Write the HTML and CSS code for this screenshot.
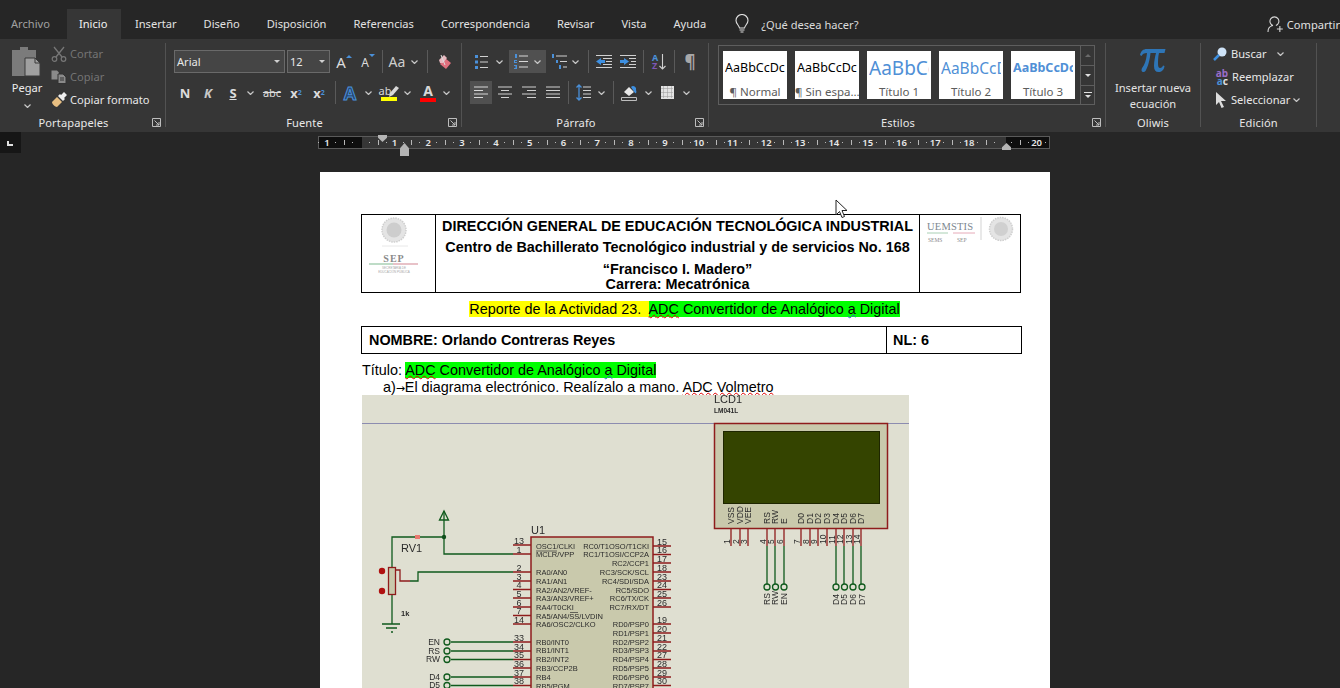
FILE: index.html
```html
<!DOCTYPE html>
<html lang="es">
<head>
  <meta charset="UTF-8">
  <title>Reporte de la Actividad 23 - Word</title>
  <link rel="stylesheet" href="styles.css">
</head>
<body>
  <svg class="defs" width="0" height="0">
    <symbol id="chev" viewBox="0 0 7 4"><path d="M.5.5 3.5 3.5 6.5.5" fill="none" stroke="#c8c8c8" stroke-width="1.2"/></symbol>
    <symbol id="launch" viewBox="0 0 9 9"><path d="M.5 8.5V.5H8.5V8.5H.5M2.5 2.5 7 7M7 4V7H4" fill="none" stroke="#bdbdbd"/></symbol>
  </svg>

  <nav class="tabs">
    <a class="tab tab-file">Archivo</a>
    <a class="tab tab-on">Inicio</a>
    <a class="tab">Insertar</a>
    <a class="tab">Diseño</a>
    <a class="tab">Disposición</a>
    <a class="tab">Referencias</a>
    <a class="tab">Correspondencia</a>
    <a class="tab">Revisar</a>
    <a class="tab">Vista</a>
    <a class="tab">Ayuda</a>
    <div class="tell">
      <svg width="16" height="20" viewBox="0 0 16 20"><path d="M5.5 14C5 11 2 10 2 6.5a6 6 0 0 1 12 0C14 10 11 11 10.5 14ZM5.5 16H10.5M6.5 18H9.5" fill="none" stroke="#e0e0e0" stroke-width="1.1"/></svg>
      <span>¿Qué desea hacer?</span>
    </div>
    <div class="share">
      <svg width="16" height="18" viewBox="0 0 16 18"><path d="M1 17C1 13 3 11 6 10.5A4.500 4.500 0 1 1 9 10.5M10 14H16M13 11V17" fill="none" stroke="#d8d8d8" stroke-width="1.1"/></svg>
      <span>Compartir</span>
    </div>
  </nav>

  <section class="ribbon">
    <div class="group g-clip">
      <div class="body clip-body">
        <div class="paste">
          <svg width="30" height="30" viewBox="0 0 30 30"><path d="M0 3H8V0H16V3H24V29H0Z" fill="#7b7b7b"/><path d="M13 11H23L28 16V29H13Z" fill="#a0a0a0" stroke="#3a3a3a"/><path d="M23 11V16H28" fill="none" stroke="#3a3a3a"/></svg>
          <span>Pegar</span>
          <svg class="chev"><use href="#chev"/></svg>
        </div>
        <div class="clip-list">
          <div class="clip-item off"><svg width="16" height="16" viewBox="0 0 16 16"><path d="M3 1 11 11M13 1 5 11" stroke="#777" stroke-width="1.3" fill="none"/><circle cx="3.5" cy="13" r="2.3" fill="none" stroke="#777" stroke-width="1.2"/><circle cx="12.5" cy="13" r="2.3" fill="none" stroke="#777" stroke-width="1.2"/></svg><span>Cortar</span></div>
          <div class="clip-item off"><svg width="16" height="14" viewBox="0 0 16 14"><path d="M.5.5H6L8 2.5V9.5H.5Z" fill="#8a8a8a"/><path d="M7 4H12L15 7V13.5H7Z" fill="#8a8a8a" stroke="#333"/><path d="M9 8H13M9 10H13" stroke="#333"/></svg><span>Copiar</span></div>
          <div class="clip-item"><svg width="16" height="16" viewBox="0 0 16 16"><path d="M1 10 6 5 11 10 6 15C4 15 1 12 1 10Z" fill="#e8bf82"/><path d="M7 4 9 2 10 3 13 0 16 3 13 6 14 7 12 9Z" fill="#efefef"/></svg><span>Copiar formato</span></div>
        </div>
      </div>
      <div class="foot"><span>Portapapeles</span><svg class="launch"><use href="#launch"/></svg></div>
    </div>

    <div class="group g-font">
      <div class="body">
        <div class="row">
          <div class="combo w111">Arial<i class="caret"></i></div>
          <div class="combo w43 ml2">12<i class="caret"></i></div>
          <div class="tb w24 ml2"><span class="big-a">A</span><i class="tri tri-up"></i></div>
          <div class="tb w24"><span class="small-a">A</span><i class="tri tri-down"></i></div>
          <i class="sep ml2"></i>
          <div class="tb w28 aa">Aa</div>
          <div class="tb w7"><svg class="chev"><use href="#chev"/></svg></div>
          <i class="sep ml9"></i>
          <div class="tb w32"><svg width="16" height="16" viewBox="0 0 16 16"><path d="M9 4 15 9 10 15 4 10Z" fill="#e0707e"/><path d="M4 9 3 6 8 1 11 4 7 9Z" fill="#e8b9c0"/><path d="M5 1 9 11" stroke="#ddd" fill="none"/></svg></div>
        </div>
        <div class="row row2">
          <div class="tb w22 fmt">N</div>
          <div class="tb w24 fmt ital">K</div>
          <div class="tb w26 fmt under">S</div>
          <div class="tb w9"><svg class="chev"><use href="#chev"/></svg></div>
          <div class="tb w28 ml3 strike">abc</div>
          <div class="tb w20 fmt script">x<sub>2</sub></div>
          <div class="tb w26 fmt script">x<sup>2</sup></div>
          <i class="sep ml3"></i>
          <div class="tb w28 effect">A</div>
          <div class="tb w8"><svg class="chev"><use href="#chev"/></svg></div>
          <div class="tb w26 ml4 stack"><span class="ab">ab<svg class="pen" width="10" height="12" viewBox="0 0 10 12"><path d="M0 12 1 8 7 1 10 3 4 10Z" fill="#d8d8d8"/></svg></span><i class="bar bar-yellow"></i></div>
          <div class="tb w8 ml1"><svg class="chev"><use href="#chev"/></svg></div>
          <div class="tb w26 ml4 stack"><span class="color-a">A</span><i class="bar bar-red"></i></div>
          <div class="tb w8 ml1"><svg class="chev"><use href="#chev"/></svg></div>
        </div>
      </div>
      <div class="foot"><span>Fuente</span><svg class="launch"><use href="#launch"/></svg></div>
    </div>

    <div class="group g-para">
      <div class="body">
        <div class="row">
          <div class="tb w22"><svg width="14" height="14" viewBox="0 0 14 14"><path d="M1 0h3v3H1zM1 5.5h3v3H1zM1 11h3v3H1z" fill="#4a90d9"/><path d="M6 1.5H14M6 7H14M6 12.5H14" stroke="#d0d0d0"/></svg></div>
          <div class="tb w8 ml3"><svg class="chev"><use href="#chev"/></svg></div>
          <div class="tb w37 ml6 hot"><svg width="14" height="15" viewBox="0 0 14 15"><path d="M1 0h2v4H1zM0 6h3v1H1v1h2v1H0zM0 11h3v4H0v-1h2v-.5H1v-1h1V12H0z" fill="#4a90d9"/><path d="M5 2H14M5 7.5H14M5 13H14" stroke="#d8d8d8"/></svg><svg class="chev chev-gap"><use href="#chev"/></svg></div>
          <div class="tb w20 ml3"><svg width="16" height="15" viewBox="0 0 16 15"><path d="M1 0h2v4H1zM5 6h2v3H5zM8 11h2v4H8z" fill="#4a90d9"/><path d="M5 2H16M9 7.5H16M12 13H16" stroke="#d0d0d0"/></svg></div>
          <div class="tb w8 ml2"><svg class="chev"><use href="#chev"/></svg></div>
          <i class="sep ml9"></i>
          <div class="tb w30"><svg width="16" height="13" viewBox="0 0 16 13"><path d="M0 6.5 5 3V5H9V8H5V10Z" fill="#3d8fe0"/><path d="M0 .5H16M7 3.5H16M10 6.5H16M7 9.5H16M0 12.5H16" stroke="#d0d0d0"/></svg></div>
          <div class="tb w18"><svg width="16" height="13" viewBox="0 0 16 13"><path d="M9 6.5 4 3V5H0V8H4V10Z" fill="#3d8fe0"/><path d="M0 .5H16M9 3.5H16M11 6.5H16M9 9.5H16M0 12.5H16" stroke="#d0d0d0"/></svg></div>
          <i class="sep ml6"></i>
          <div class="tb w30 sort"><span class="az"><b class="az-a">A</b><b class="az-z">Z</b></span><svg width="7" height="16" viewBox="0 0 7 16"><path d="M3.5 0V15M.5 12 3.5 15 6.5 12" fill="none" stroke="#d0d0d0" stroke-width="1.1"/></svg></div>
          <i class="sep"></i>
          <div class="tb w30 pilcrow">¶</div>
        </div>
        <div class="row row2">
          <div class="tb w22 hot"><svg width="14" height="13" viewBox="0 0 14 13"><path d="M0 1H14M0 4.5H9M0 8H14M0 11.5H9" stroke="#d8d8d8"/></svg></div>
          <div class="tb w22 ml2"><svg width="14" height="13" viewBox="0 0 14 13"><path d="M0 1H14M3 4.5H11M0 8H14M3 11.5H11" stroke="#d0d0d0"/></svg></div>
          <div class="tb w22 ml2"><svg width="14" height="13" viewBox="0 0 14 13"><path d="M0 1H14M5 4.5H14M0 8H14M5 11.5H14" stroke="#d0d0d0"/></svg></div>
          <div class="tb w22 ml2"><svg width="14" height="13" viewBox="0 0 14 13"><path d="M0 1H14M0 4.5H14M0 8H14M0 11.5H14" stroke="#d0d0d0"/></svg></div>
          <i class="sep ml4"></i>
          <div class="tb w28"><svg width="15" height="17" viewBox="0 0 15 17"><path d="M3 1V16M.5 3.5 3 1 5.5 3.5M.5 13.5 3 16 5.5 13.5" fill="none" stroke="#4a90d9" stroke-width="1.3"/><path d="M7 3H15M7 6.5H15M7 10H15M7 13.5H15" stroke="#d0d0d0"/></svg></div>
          <div class="tb w8"><svg class="chev"><use href="#chev"/></svg></div>
          <i class="sep ml8"></i>
          <div class="tb w30"><svg width="16" height="17" viewBox="0 0 16 17"><path d="M3 8 8 3 13 8 8 12Z" fill="#e8e8e8"/><path d="M10 3A3 3 0 0 1 15 6C16 8 15 10 14 9Z" fill="#3d8fe0"/><path d="M.5 13.5H15.5V16.5H.5Z" fill="none" stroke="#bdbdbd"/></svg></div>
          <div class="tb w8"><svg class="chev"><use href="#chev"/></svg></div>
          <div class="tb w30"><svg width="13" height="13" viewBox="0 0 13 13"><rect width="13" height="13" fill="#e4e4e4"/><path d="M.5 2.5H12.5M.5 6.5H12.5M.5 10.5H12.5M2.5.5V12.5M6.5.5V12.5M10.5.5V12.5" stroke="#999" stroke-dasharray="1 1"/></svg></div>
          <div class="tb w8"><svg class="chev"><use href="#chev"/></svg></div>
        </div>
      </div>
      <div class="foot"><span>Párrafo</span><svg class="launch"><use href="#launch"/></svg></div>
    </div>

    <div class="group g-styles">
      <div class="body">
        <div class="gallery">
          <div class="card"><div class="sample s-normal">AaBbCcDc</div><div class="cap">¶ Normal</div></div>
          <div class="card"><div class="sample s-normal">AaBbCcDc</div><div class="cap">¶ Sin espa...</div></div>
          <div class="card"><div class="sample s-t1">AaBbCc</div><div class="cap">Título 1</div></div>
          <div class="card"><div class="sample s-t2">AaBbCcD</div><div class="cap">Título 2</div></div>
          <div class="card"><div class="sample s-t3">AaBbCcDc</div><div class="cap">Título 3</div></div>
          <div class="scroll">
            <div class="sc sc-off"><i class="mini-up"></i></div>
            <div class="sc"><i class="mini-down"></i></div>
            <div class="sc sc-more"><i class="mini-down"></i></div>
          </div>
        </div>
      </div>
      <div class="foot"><span>Estilos</span><svg class="launch"><use href="#launch"/></svg></div>
    </div>

    <div class="group g-eq">
      <div class="body eq">
        <svg class="pi" width="26" height="25" viewBox="0 0 26 25"><path d="M0 7C1 3 3 1 7 1H25.500L24.500 5H19C18 9 18 13 18 16 18 19 19 20 20 20 21.500 20 22.500 19 23 17.500L24.500 18C24 22 21.500 24 18.500 24 15.500 24 14 22 14 18 14 13 15 9 16 5H10.500C10 11 8 19 5.500 23 4.500 24.500 1.500 24.500 1.500 22 1.500 20 3 19 4 17 6 13 6.500 9 7 5 4 5 2.500 6 1.500 8Z" fill="#2e75b6"/></svg>
        <span class="eq-text">Insertar nueva<br>ecuación</span>
      </div>
      <div class="foot"><span>Oliwis</span></div>
    </div>

    <div class="group g-edit">
      <div class="body edit">
        <div class="edit-item"><svg width="14" height="14" viewBox="0 0 14 14"><circle cx="9" cy="5" r="4.5" fill="#cfe3f7"/><path d="M6 8 1 13" stroke="#3d8fe0" stroke-width="2.5"/></svg><span>Buscar</span><svg class="chev buscar-chev"><use href="#chev"/></svg></div>
        <div class="edit-item"><span class="rep"><b class="rep-a">ab</b><b class="rep-c">ac</b></span><span>Reemplazar</span></div>
        <div class="edit-item"><svg width="14" height="16" viewBox="0 0 14 16"><path d="M3 0 13 9H8L11 15 8.5 16 6 10 3 13Z" fill="#dcdcdc"/></svg><span>Seleccionar</span><svg class="chev sel-chev"><use href="#chev"/></svg></div>
      </div>
      <div class="foot"><span>Edición</span></div>
    </div>
  </section>

  <main class="work">
    <div class="ruler-row">
      <div class="tab-stop"><i></i></div>
      <div class="ruler">
        <div class="ruler-strip">
          <span class="cm">1</span><span class="cm"></span><span class="cm">1</span><span class="cm">2</span><span class="cm">3</span><span class="cm">4</span><span class="cm">5</span><span class="cm">6</span><span class="cm">7</span><span class="cm">8</span><span class="cm">9</span><span class="cm">10</span><span class="cm">11</span><span class="cm">12</span><span class="cm">13</span><span class="cm">14</span><span class="cm">15</span><span class="cm">16</span><span class="cm">17</span><span class="cm">18</span><span class="cm"></span><span class="cm">20</span>
        </div>
        <i class="mark mark-first"></i>
        <i class="mark mark-hang"></i>
        <i class="mark mark-right"></i>
      </div>
    </div>

    <article class="page">
      <table class="head-table">
        <tr>
          <td class="logo-left">
            <svg width="72" height="76" viewBox="0 0 72 76">
              <circle cx="32" cy="15" r="12" fill="#e4e4e4" stroke="#cfcfcf" stroke-width="1.5" stroke-dasharray="1.5 1"/>
              <circle cx="32" cy="15" r="7.5" fill="#cdcdcd"/>
              <path d="M20 31H46" stroke="#e8e8e8"/>
              <text class="sep-word" x="32" y="47">SEP</text>
              <path d="M7 49H31" stroke="#a9d0b4" stroke-width="1.5"/>
              <path d="M31 49H56" stroke="#e0aeb6" stroke-width="1.5"/>
              <text class="sep-small" x="32" y="54">SECRETARÍA DE</text>
              <text class="sep-small" x="32" y="58">EDUCACIÓN PÚBLICA</text>
            </svg>
          </td>
          <td class="head-title">
            <p class="t1">DIRECCIÓN GENERAL DE EDUCACIÓN TECNOLÓGICA INDUSTRIAL</p>
            <p class="t2">Centro de Bachillerato Tecnológico industrial y de servicios No. 168</p>
            <p class="t3">“Francisco I. Madero”</p>
            <p class="t4">Carrera: Mecatrónica</p>
          </td>
          <td class="logo-right">
            <svg width="100" height="76" viewBox="0 0 100 76">
              <text class="uem" x="7" y="15">UEMSTIS</text>
              <path d="M7 18H28" stroke="#a9d0b4"/>
              <path d="M33 18H55" stroke="#e6aab8"/>
              <text class="uem-small" x="8" y="27">SEMS</text>
              <text class="uem-small" x="37" y="27">SEP</text>
              <path d="M61 2V25" stroke="#e2e2e2" stroke-width="1.5"/>
              <circle cx="81" cy="14" r="11.500" fill="#e4e4e4" stroke="#cfcfcf" stroke-width="1.5" stroke-dasharray="1.5 1"/>
              <circle cx="81" cy="14" r="7" fill="#d0d0d0"/>
            </svg>
          </td>
        </tr>
      </table>

      <p class="report"><span class="hl-y">Reporte de la Actividad 23.&nbsp; </span><span class="hl-g"><span class="typo">ADC</span> Convertidor de Analógico <span class="gram">a</span> Digital</span></p>

      <table class="name-table">
        <tr>
          <td class="name-cell">NOMBRE: Orlando Contreras Reyes</td>
          <td class="nl-cell">NL: 6</td>
        </tr>
      </table>

      <p class="title-line">Título: <span class="hl-g"><span class="typo">ADC</span> Convertidor de Analógico <span class="gram">a</span> Digital</span></p>
      <p class="item-line">a)<span class="arrow">→</span>El diagrama electrónico. Realízalo a mano. <span class="typo">ADC Volmetro</span></p>

      <svg class="schematic" width="547" height="300" viewBox="362 395 547 300">
        <rect x="362" y="395" width="547" height="300" fill="#dfdfd1"/>
        <path d="M362 423.5H909" stroke="#8c8cb0"/>

        <!-- LCD -->
        <text class="lbl lcd-name" x="714" y="403">LCD1</text>
        <text class="lbl tiny-bold" x="714" y="413">LM041L</text>
        <rect x="714.5" y="423.5" width="173" height="105" fill="#c9c9ac" stroke="#8f1c1c" stroke-width="1.5"/>
        <rect x="723.5" y="431.5" width="156" height="72" fill="#344400" stroke="#1e2600"/>
        <g class="pin">
          <path d="M731 529V546M740 529V546M748 529V546M767 529V546M775 529V546M784 529V546M801 529V546M810 529V546M818 529V546M827 529V546M836 529V546M844 529V546M853 529V546M861 529V546"/>
        </g>
        <g class="wire">
          <path d="M767 546V584M775 546V584M784 546V584M836 546V584M844 546V584M853 546V584M861 546V584"/>
          <circle cx="767" cy="587" r="3"/><circle cx="775.5" cy="587" r="3"/><circle cx="784" cy="587" r="3"/>
          <circle cx="836" cy="587" r="3"/><circle cx="844.5" cy="587" r="3"/><circle cx="853" cy="587" r="3"/><circle cx="862" cy="587" r="3"/>
        </g>
        <g class="lbl vert">
          <text transform="translate(734 524) rotate(-90)">VSS</text>
          <text transform="translate(743 524) rotate(-90)">VDD</text>
          <text transform="translate(751 524) rotate(-90)">VEE</text>
          <text transform="translate(770 524) rotate(-90)">RS</text>
          <text transform="translate(778 524) rotate(-90)">RW</text>
          <text transform="translate(787 524) rotate(-90)">E</text>
          <text transform="translate(804 524) rotate(-90)">D0</text>
          <text transform="translate(813 524) rotate(-90)">D1</text>
          <text transform="translate(821 524) rotate(-90)">D2</text>
          <text transform="translate(830 524) rotate(-90)">D3</text>
          <text transform="translate(839 524) rotate(-90)">D4</text>
          <text transform="translate(847 524) rotate(-90)">D5</text>
          <text transform="translate(856 524) rotate(-90)">D6</text>
          <text transform="translate(864 524) rotate(-90)">D7</text>
          <text transform="translate(730 544) rotate(-90)">1</text>
          <text transform="translate(739 544) rotate(-90)">2</text>
          <text transform="translate(747 544) rotate(-90)">3</text>
          <text transform="translate(766 544) rotate(-90)">4</text>
          <text transform="translate(774 544) rotate(-90)">5</text>
          <text transform="translate(783 544) rotate(-90)">6</text>
          <text transform="translate(800 544) rotate(-90)">7</text>
          <text transform="translate(809 544) rotate(-90)">8</text>
          <text transform="translate(817 544) rotate(-90)">9</text>
          <text transform="translate(826 544) rotate(-90)">10</text>
          <text transform="translate(835 544) rotate(-90)">11</text>
          <text transform="translate(843 544) rotate(-90)">12</text>
          <text transform="translate(852 544) rotate(-90)">13</text>
          <text transform="translate(860 544) rotate(-90)">14</text>
          <text transform="translate(770 605) rotate(-90)">RS</text>
          <text transform="translate(778 605) rotate(-90)">RW</text>
          <text transform="translate(787 605) rotate(-90)">EN</text>
          <text transform="translate(839 605) rotate(-90)">D4</text>
          <text transform="translate(847 605) rotate(-90)">D5</text>
          <text transform="translate(856 605) rotate(-90)">D6</text>
          <text transform="translate(865 605) rotate(-90)">D7</text>
        </g>

        <!-- PIC -->
        <text class="lbl u1" x="531" y="534">U1</text>
        <rect x="531" y="537" width="122" height="170" fill="#c9c9ac" stroke="#8f1c1c" stroke-width="1.5"/>
        <g class="pin">
          <path d="M513 545H531M513 554H531M513 572H531M513 581H531M513 589.5H531M513 598H531M513 607H531M513 615.5H531M513 624H531M513 642H531M513 651H531M513 659.5H531M513 668H531M513 677H531M513 685.5H531"/>
          <path d="M653 546H671M653 554.5H671M653 563H671M653 572H671M653 581H671M653 589.5H671M653 598H671M653 607H671M653 624H671M653 633H671M653 642H671M653 651H671M653 659.5H671M653 668H671M653 677H671M653 685.5H671"/>
        </g>
        <path class="over" d="M536 551H557M570 612.500H578"/>
        <g class="lbl chip">
          <text x="536" y="549">OSC1/CLKI</text>
          <text x="536" y="557">MCLR/VPP</text>
          <text x="536" y="575">RA0/AN0</text>
          <text x="536" y="584">RA1/AN1</text>
          <text x="536" y="593">RA2/AN2/VREF-</text>
          <text x="536" y="601">RA3/AN3/VREF+</text>
          <text x="536" y="610">RA4/T0CKI</text>
          <text x="536" y="619">RA5/AN4/SS/LVDIN</text>
          <text x="536" y="627">RA6/OSC2/CLKO</text>
          <text x="536" y="645">RB0/INT0</text>
          <text x="536" y="653">RB1/INT1</text>
          <text x="536" y="662">RB2/INT2</text>
          <text x="536" y="671">RB3/CCP2B</text>
          <text x="536" y="680">RB4</text>
          <text x="536" y="689">RB5/PGM</text>
        </g>
        <g class="lbl chip chip-r">
          <text x="649" y="549">RC0/T1OSO/T1CKI</text>
          <text x="649" y="557">RC1/T1OSI/CCP2A</text>
          <text x="649" y="566">RC2/CCP1</text>
          <text x="649" y="575">RC3/SCK/SCL</text>
          <text x="649" y="584">RC4/SDI/SDA</text>
          <text x="649" y="593">RC5/SDO</text>
          <text x="649" y="601">RC6/TX/CK</text>
          <text x="649" y="610">RC7/RX/DT</text>
          <text x="649" y="627">RD0/PSP0</text>
          <text x="649" y="636">RD1/PSP1</text>
          <text x="649" y="645">RD2/PSP2</text>
          <text x="649" y="653">RD3/PSP3</text>
          <text x="649" y="662">RD4/PSP4</text>
          <text x="649" y="671">RD5/PSP5</text>
          <text x="649" y="680">RD6/PSP6</text>
          <text x="649" y="689">RD7/PSP7</text>
        </g>
        <g class="lbl num">
          <text x="519" y="544">13</text><text x="519" y="553">1</text><text x="519" y="571">2</text><text x="519" y="580">3</text><text x="519" y="588">4</text><text x="519" y="597">5</text><text x="519" y="606">6</text><text x="519" y="614">7</text><text x="519" y="623">14</text><text x="519" y="641">33</text><text x="519" y="650">34</text><text x="519" y="658">35</text><text x="519" y="667">36</text><text x="519" y="676">37</text><text x="519" y="684">38</text>
          <text x="662" y="545">15</text><text x="662" y="553">16</text><text x="662" y="562">17</text><text x="662" y="571">18</text><text x="662" y="580">23</text><text x="662" y="588">24</text><text x="662" y="597">25</text><text x="662" y="606">26</text><text x="662" y="623">19</text><text x="662" y="632">20</text><text x="662" y="641">21</text><text x="662" y="650">22</text><text x="662" y="658">27</text><text x="662" y="667">28</text><text x="662" y="676">29</text><text x="662" y="684">30</text>
        </g>

        <!-- potenciometro y terminales -->
        <g class="wire">
          <path d="M392 567V537H444V511M444 537V554H513M410 581H418V572H513M392 594V624"/>
          <path d="M439.5 520 444 511 448.5 520Z"/>
          <path d="M382 624H400M386 628H397M391 632H393"/>
          <path d="M451 642H513M451 651H513M451 659.5H513M451 677H513M451 685.5H513"/>
          <circle cx="447" cy="642" r="3"/><circle cx="447" cy="651" r="3"/><circle cx="447" cy="659.5" r="3"/><circle cx="447" cy="677" r="3"/><circle cx="447" cy="685.5" r="3"/>
        </g>
        <circle cx="444" cy="537" r="2.2" fill="#0f4f1b"/>
        <rect x="415" y="535" width="5" height="4" fill="#ea7a70"/>
        <rect x="388.5" y="567.5" width="7" height="27" fill="#c9c9ac" stroke="#8f1c1c" stroke-width="1.3"/>
        <path class="red-wire" d="M396 570 H400 V581 H410"/>
        <circle cx="382" cy="571" r="3.2" fill="#b01010"/>
        <circle cx="382" cy="591" r="3.2" fill="#b01010"/>
        <text class="lbl rv" x="401" y="552">RV1</text>
        <text class="lbl one-k" x="401" y="616">1k</text>
        <g class="lbl term">
          <text x="440" y="645">EN</text><text x="440" y="654">RS</text><text x="440" y="662">RW</text><text x="440" y="680">D4</text><text x="440" y="688">D5</text>
        </g>
      </svg>
    </article>

    <svg class="cursor" width="13" height="20" viewBox="0 0 13 20"><path d="M1 1V16L4.5 12.5 7 18.5 9.5 17.5 7 11.5H12Z" fill="#fff" stroke="#222"/></svg>
  </main>
</body>
</html>
```
FILE: styles.css
```css
/* ventana de Word en tema oscuro */
* { box-sizing: border-box; }
html, body { height: 688px; }
body {
  margin: 0;
  overflow: hidden;
  background: #262626;
  color: #e6e6e6;
  font: 11.1px "Noto Sans", sans-serif;
}
.defs { position: absolute; }
p { margin: 0; }

/* pestañas */
.tabs {
  display: flex;
  align-items: flex-end;
  height: 39px;
  background: #262626;
}
.tab {
  height: 30px;
  line-height: 30px;
  padding: 0 13px 0 14px;
  white-space: nowrap;
  color: #e2e2e2;
}
.tab-file { width: 67px; padding: 0 0 0 11px; color: #a0a0a0; }
.tab-on { width: 54px; padding: 0 0 0 12px; background: #363636; color: #f2f2f2; }
.tell {
  display: flex;
  align-items: center;
  gap: 11px;
  height: 30px;
  margin-left: 15px;
  color: #dcdcdc;
}
.share {
  display: flex;
  align-items: center;
  gap: 4px;
  height: 30px;
  margin-left: auto;
  width: 73px;
  white-space: nowrap;
  color: #e2e2e2;
}

/* cinta */
.ribbon {
  display: flex;
  height: 93px;
  padding-top: 4px;
  background: #363636;
}
.group {
  height: 84px;
  border-right: 1px solid #525252;
  flex: none;
}
.g-clip { width: 166px; }
.g-font { width: 296px; padding-left: 8px; }
.g-para { width: 247px; padding-left: 8px; }
.g-styles { width: 397px; padding-left: 9px; }
.g-eq { width: 95px; }
.g-edit { width: 116px; }
.body { display: flow-root; height: 72px; }
.foot {
  display: flex;
  align-items: center;
  height: 16px;
  margin-top: -1px;
  color: #e8e8e8;
  letter-spacing: .1px;
}
.foot span { flex: 1; text-align: center; white-space: nowrap; }
.launch { width: 9px; height: 9px; margin: 0 4px 0 5px; }
.g-font .foot { margin-left: -8px; }
.g-para .foot { margin-left: -8px; }
.g-styles .foot { margin-left: -9px; }

.row { display: flex; align-items: center; height: 23px; margin-top: 7px; }
.row2 { margin-top: 8px; }
.tb {
  display: flex;
  align-items: center;
  justify-content: center;
  height: 23px;
  flex: none;
  color: #dcdcdc;
}
.sep { width: 1px; height: 23px; background: #5a5a5a; flex: none; }
.chev { width: 7px; height: 4px; flex: none; }
.chev-gap { margin-left: 6px; }
.hot { background: #505050; }

.w7 { width: 7px; } .w8 { width: 8px; } .w9 { width: 9px; }
.w18 { width: 18px; } .w20 { width: 20px; } .w22 { width: 22px; }
.w24 { width: 24px; } .w26 { width: 26px; } .w28 { width: 28px; }
.w30 { width: 30px; } .w32 { width: 32px; } .w37 { width: 37px; }
.ml1 { margin-left: 1px; } .ml2 { margin-left: 2px; } .ml3 { margin-left: 3px; }
.ml4 { margin-left: 4px; } .ml6 { margin-left: 6px; } .ml8 { margin-left: 8px; }
.ml9 { margin-left: 9px; }

/* portapapeles */
.clip-body { display: flex; }
.paste {
  display: flex;
  flex-direction: column;
  align-items: center;
  width: 50px;
  padding: 4px 0 0 4px;
  color: #ececec;
}
.paste span { margin-top: 2px; line-height: 18px; }
.paste .chev { margin-top: 7px; }
.clip-list { display: flex; flex-direction: column; margin: -1px 0 0 1px; }
.clip-item {
  display: flex;
  align-items: center;
  gap: 3px;
  height: 23px;
  white-space: nowrap;
  color: #e8e8e8;
}
.clip-item.off { color: #747474; }

/* fuente */
.combo {
  position: relative;
  height: 23px;
  padding-left: 2px;
  line-height: 21px;
  background: #454545;
  border: 1px solid #6a6a6a;
  color: #e8e8e8;
  flex: none;
}
.w111 { width: 111px; }
.w43 { width: 43px; }
.caret {
  position: absolute;
  right: 4px;
  top: 9px;
  border: 3px solid transparent;
  border-top: 3px solid #d0d0d0;
}
.big-a { font-size: 15px; }
.small-a { font-size: 12px; margin-top: 2px; }
.tri { width: 0; height: 0; border: 3px solid transparent; }
.tri-up { border-bottom: 3px solid #4a90d9; margin-top: -14px; }
.tri-down { border-top: 3px solid #4a90d9; margin-top: -9px; }
.aa { font-size: 14px; color: #cfcfcf; }
.fmt { font-weight: 700; font-size: 13px; }
.ital { font-style: italic; color: #c8c8c8; }
.under { text-decoration: underline; }
.strike { font-size: 11px; text-decoration: line-through; }
.script sub, .script sup { font-size: 7px; color: #4a90d9; line-height: 0; }
.script sub { vertical-align: -3px; }
.script sup { vertical-align: 5px; }
.effect {
  font-size: 18px;
  font-weight: 700;
  color: #26466e;
  -webkit-text-stroke: 1px #4a90d9;
}
.stack { flex-direction: column; }
.ab { display: flex; align-items: flex-end; font-size: 11px; line-height: 13px; color: #d8d8d8; }
.pen { margin-left: -2px; }
.color-a { font-size: 14px; line-height: 15px; font-weight: 700; color: #d8d8d8; }
.bar { width: 16px; height: 4px; }
.bar-yellow { background: #ffff00; }
.bar-red { background: #ff0000; }

/* parrafo */
.sort { gap: 1px; }
.az { display: flex; flex-direction: column; font-size: 9px; line-height: 8px; }
.az b { font-weight: 700; }
.az-a { color: #4a90d9; }
.az-z { color: #7e57b5; }
.pilcrow { font-size: 17px; font-weight: 700; color: #a8a8a8; }

/* estilos */
.gallery {
  display: flex;
  gap: 8px;
  width: 377px;
  height: 60px;
  margin-top: 2px;
  padding: 5px 0 0 4px;
  border: 1px solid #5e5e5e;
}
.card {
  width: 64px;
  height: 48px;
  background: #fff;
  overflow: hidden;
  text-align: center;
  flex: none;
}
.sample {
  height: 32px;
  margin: 0 2px;
  line-height: 34px;
  overflow: hidden;
  white-space: nowrap;
  text-align: left;
}
.s-normal { color: #000; font-size: 12.5px; }
.s-t1 { color: #4f8fd6; font-size: 19px; }
.s-t2 { color: #4f8fd6; font-size: 15.5px; }
.s-t3 { color: #4f8fd6; font-size: 12.5px; font-weight: 700; }
.cap { line-height: 17px; color: #5c5c5c; font-size: 11.5px; white-space: nowrap; }
.scroll {
  display: flex;
  flex-direction: column;
  width: 14px;
  height: 58px;
  margin: -5px 0 0 -3px;
  border-left: 1px solid #5e5e5e;
}
.sc {
  display: flex;
  align-items: center;
  justify-content: center;
  flex-direction: column;
  gap: 2px;
  height: 20px;
  border-bottom: 1px solid #5e5e5e;
}
.sc:last-child { border-bottom: 0; height: 18px; }
.mini-up { border: 3px solid transparent; border-bottom: 3px solid #6a6a6a; border-top: 0; }
.mini-down { border: 3px solid transparent; border-top: 3px solid #e0e0e0; border-bottom: 0; }
.sc-more::before { content: ""; width: 8px; height: 1px; background: #e0e0e0; }

/* ecuacion */
.eq {
  display: flex;
  flex-direction: column;
  align-items: center;
}
.pi { margin: 5px 0 7px; flex: none; }
.eq-text { text-align: center; line-height: 16px; color: #e4e4e4; }

/* edicion */
.edit { padding-left: 12px; }
.edit-item {
  display: flex;
  align-items: center;
  gap: 3px;
  height: 23px;
  white-space: nowrap;
  color: #e8e8e8;
}
.edit-item:first-child { margin-top: -1px; }
.edit-item span:not(.rep) { margin-left: 1px; }
.buscar-chev { margin-left: 7px; }
.rep { display: flex; flex-direction: column; width: 15px; font-size: 10px; line-height: 8px; }
.rep b { font-weight: 700; }
.rep-a { color: #9a6dc8; text-align: right; }
.rep-c { color: #e0e0e0; text-align: right; }
.rep-c::first-letter { color: #4a90d9; }

/* regla */
.work { position: relative; }
.ruler-row { display: flex; height: 40px; }
.tab-stop {
  position: relative;
  width: 21px;
  height: 21px;
  background: #161616;
}
.tab-stop i {
  position: absolute;
  left: 7px;
  top: 9px;
  width: 6px;
  height: 5px;
  border-left: 2px solid #e0e0e0;
  border-bottom: 2px solid #e0e0e0;
}
.ruler {
  position: relative;
  width: 732px;
  height: 13px;
  margin: 4px 0 0 297px;
  background: linear-gradient(90deg, #0e0e0e 43px, #363636 43px, #363636 687px, #0e0e0e 687px);
  border: 1px solid #5a5a5a;
}
.ruler-strip {
  display: flex;
  height: 11px;
  margin-left: -9px;
  clip-path: inset(0 0 0 8px);
}
.cm {
  width: 33.8px;
  flex: none;
  text-align: center;
  font-size: 9.5px;
  line-height: 11px;
  font-weight: 600;
  color: #e8e8e8;
  background:
    linear-gradient(#b8b8b8, #b8b8b8) 8px 5px / 1px 1px no-repeat,
    linear-gradient(#b8b8b8, #b8b8b8) 0 3px / 1px 5px no-repeat,
    linear-gradient(#b8b8b8, #b8b8b8) 25px 5px / 1px 1px no-repeat;
}
.mark { position: absolute; width: 9px; }
.mark-first {
  left: 59px;
  top: -2px;
  height: 7px;
  background: #b4b4b4;
  clip-path: polygon(0 0, 100% 0, 100% 40%, 50% 100%, 0 40%);
}
.mark-hang {
  left: 81px;
  top: 6px;
  height: 13px;
  background: #b4b4b4;
  clip-path: polygon(50% 0, 100% 40%, 100% 100%, 0 100%, 0 40%);
}
.mark-right {
  left: 683px;
  top: 6px;
  height: 7px;
  background: #b4b4b4;
  clip-path: polygon(50% 0, 100% 60%, 100% 100%, 0 100%, 0 60%);
}

/* hoja */
.page {
  width: 730px;
  height: 640px;
  margin-left: 320px;
  padding: 42px 0 0 42px;
  background: #fff;
  color: #000;
  font: 14.4px "Liberation Sans", Arial, sans-serif;
}
table { border-collapse: collapse; table-layout: fixed; margin-left: -1px; }
td { padding: 0; border: 1px solid #000; }
.head-table { width: 660px; height: 79px; }
.logo-left { width: 74px; vertical-align: top; line-height: 0; }
.logo-right { width: 101px; vertical-align: top; line-height: 0; }
.head-title { text-align: center; font-weight: 700; vertical-align: top; white-space: nowrap; }
.t1 { margin-top: 3px; line-height: 17px; }
.t2 { margin-top: 4px; line-height: 17px; }
.t3 { margin-top: 5px; line-height: 16px; }
.t4 { line-height: 15px; }
.sep-word { font: 700 10px "Liberation Serif", serif; fill: #8a8a8a; text-anchor: middle; letter-spacing: 1px; }
.sep-small { font: 3px "Liberation Sans", sans-serif; fill: #a8a8a8; text-anchor: middle; }
.uem { font: 10.5px "Liberation Serif", serif; fill: #7d8790; letter-spacing: .2px; }
.uem-small { font: 5.5px "Liberation Serif", serif; fill: #8a8a8a; }

.report { margin: 8px 0; width: 659px; padding-right: 14px; line-height: 17px; text-align: center; }
.hl-y { background: #ffff00; }
.hl-g { background: #00ff00; }
.typo { text-decoration: underline wavy #e00000 1.3px; text-underline-offset: 0; }
.gram { text-decoration: underline wavy #2b5fd0 1.3px; text-underline-offset: 0; }
.name-table { width: 661px; height: 28px; font-weight: 700; }
.name-cell { width: 525px; padding-left: 7px; }
.nl-cell { padding-left: 6px; }
.title-line { margin-top: 8px; line-height: 17px; }
.item-line { height: 16px; padding-left: 21px; line-height: 16px; }
.arrow { display: inline-block; width: 9px; font: 11px/0 "DejaVu Sans", sans-serif; }

/* esquema */
.schematic { display: block; filter: blur(.35px); }
.lbl text, text.lbl { font-family: "Liberation Sans", Arial, sans-serif; fill: #2b2b2b; }
.chip text { font-size: 7.5px; }
.chip-r text { text-anchor: end; }
.num text { font-size: 9px; text-anchor: middle; }
.vert text { font-size: 8.5px; }
.term text { font-size: 8.5px; text-anchor: end; }
.lcd-name { font-size: 11px; }
.tiny-bold { font-size: 6.5px; font-weight: 700; }
.u1 { font-size: 11px; }
.rv { font-size: 11px; }
.one-k { font-size: 7.5px; font-weight: 700; }
.pin path { fill: none; stroke: #8f1c1c; stroke-width: 1.3; }
.wire { fill: none; stroke: #0f5a1c; stroke-width: 1.3; }
.red-wire { fill: none; stroke: #8f1c1c; stroke-width: 1.3; }
.over { fill: none; stroke: #333; stroke-width: .7; }

.cursor { position: absolute; left: 835px; top: 67px; }
```
